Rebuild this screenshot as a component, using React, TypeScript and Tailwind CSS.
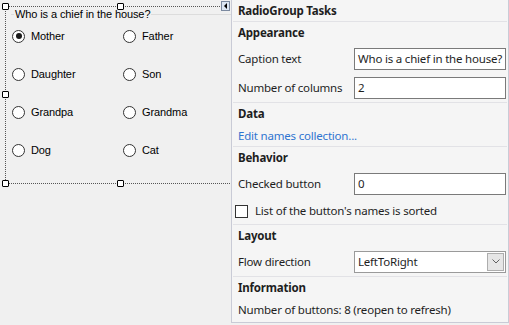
import React from "react";

function Radio({ label, checked }: { label: string; checked?: boolean }) {
  return (
    <div className="flex items-center h-[38px] pl-[6px] gap-[6px]">
      <div className="w-[13px] h-[13px] rounded-full border border-[#333333] bg-white flex items-center justify-center">
        {checked && <div className="w-[6px] h-[6px] rounded-full bg-[#1a1a1a]" />}
      </div>
      <span className="text-[11px] leading-[14px] tracking-[-0.1px] text-black">{label}</span>
    </div>
  );
}

function Handle({ cls }: { cls: string }) {
  return <div className={"absolute w-[7px] h-[7px] bg-white border border-black rounded-[1px] " + cls} />;
}

function Header({ children, cls }: { children: React.ReactNode; cls: string }) {
  return <div className={"flex items-center pl-[6px] font-bold " + cls}>{children}</div>;
}

function Sep() {
  return <div className="h-px bg-[#e2e2e6] mx-[1px]" />;
}

function FieldRow({ label, value, cls }: { label: string; value: string; cls: string }) {
  return (
    <div className={"flex items-center " + cls}>
      <div className="w-[122px] pl-[6px] whitespace-nowrap">{label}</div>
      <div className="w-[152px] h-[22px] border border-[#7a7a7a] bg-white flex items-center pl-[3px] overflow-hidden whitespace-nowrap">
        {value}
      </div>
    </div>
  );
}

export default function App() {
  const items: [string, boolean][] = [
    ["Mother", true],
    ["Father", false],
    ["Daughter", false],
    ["Son", false],
    ["Grandpa", false],
    ["Grandma", false],
    ["Dog", false],
    ["Cat", false],
  ];
  return (
    <div className="w-[509px] h-[325px] bg-[#f0f0f0] flex overflow-hidden">
      {/* Designer canvas */}
      <div className="relative w-[231px] h-[325px] overflow-hidden font-['Liberation_Sans',Arial,sans-serif]">
        <div className="absolute left-[5px] top-[6px] w-[227px] h-[178px] border border-dotted border-[#555555]">
          <div className="relative h-[10px]">
            <div className="absolute left-0 right-0 top-0 flex items-center h-[14px]">
              <div className="w-[5px]" />
              <div className="w-[3px] h-px bg-[#dcdcdc]" />
              <span className="px-[1px] text-[11px] leading-[14px] tracking-[-0.1px] text-black whitespace-nowrap">
                Who is a chief in the house?
              </span>
              <div className="flex-1 h-px bg-[#dcdcdc]" />
            </div>
          </div>
          <div className="grid grid-cols-[111px_1fr]">
            {items.map(([l, c]) => (
              <Radio key={l} label={l} checked={c} />
            ))}
          </div>
        </div>
        <Handle cls="left-[2px] top-[3px]" />
        <Handle cls="left-[117px] top-[3px]" />
        <Handle cls="left-[2px] top-[91px]" />
        <Handle cls="left-[2px] top-[180px]" />
        <Handle cls="left-[117px] top-[180px]" />
        <div className="absolute left-[221px] top-[1px] w-[9px] h-[10px] border border-[#7c8aa0] bg-[#dce6f2] flex items-center justify-center">
          <svg width="5" height="6" viewBox="0 0 5 6">
            <polygon points="4,0 4,6 1,3" fill="#000" />
          </svg>
        </div>
      </div>

      {/* Tasks panel */}
      <div className="w-[278px] h-[323px] border-l border-r border-b border-[#c9cbd6] bg-[#f5f5f5] flex flex-col text-[11.5px] tracking-[-0.2px] leading-[16px] text-[#1e1e1e] font-['Noto_Sans','Open_Sans',sans-serif]">
        <Header cls="h-[21px]">RadioGroup Tasks</Header>
        <Sep />
        <Header cls="h-[22px]">Appearance</Header>
        <FieldRow cls="h-[29px]" label="Caption text" value="Who is a chief in the house?" />
        <FieldRow cls="h-[29px]" label="Number of columns" value="2" />
        <Sep />
        <Header cls="h-[22px]">Data</Header>
        <div className="h-[21px] flex items-center pl-[6px] text-[#2f74d0]">Edit names collection...</div>
        <Sep />
        <Header cls="h-[22px]">Behavior</Header>
        <FieldRow cls="h-[30px]" label="Checked button" value="0" />
        <div className="h-[24px] flex items-center pl-[3px] gap-[7px]">
          <div className="w-[13px] h-[13px] border border-[#333333] bg-white" />
          <span>List of the button's names is sorted</span>
        </div>
        <div className="h-[1px]" />
        <Sep />
        <Header cls="h-[22px]">Layout</Header>
        <div className="h-[29px] flex items-center">
          <div className="w-[122px] pl-[6px] whitespace-nowrap">Flow direction</div>
          <div className="w-[152px] h-[22px] border border-[#9a9a9a] bg-white flex items-center pl-[3px] pr-[1px]">
            <span className="flex-1">LeftToRight</span>
            <div className="w-[17px] h-[18px] border border-[#adadad] bg-[#e6e6e6] flex items-center justify-center">
              <svg width="8" height="5" viewBox="0 0 8 5">
                <polyline points="0.5,0.5 4,4 7.5,0.5" fill="none" stroke="#606060" strokeWidth="1" />
              </svg>
            </div>
          </div>
        </div>
        <Sep />
        <Header cls="h-[22px]">Information</Header>
        <div className="h-[22px] flex items-center pl-[6px]">Number of buttons: 8 (reopen to refresh)</div>
      </div>
    </div>
  );
}
